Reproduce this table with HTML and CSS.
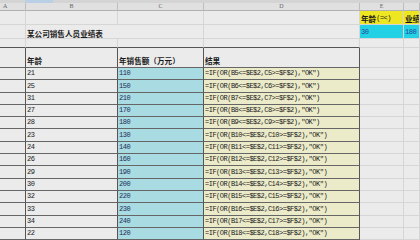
FILE: index.html
```html
<!DOCTYPE html>
<html>
<head>
<meta charset="utf-8">
<link rel="stylesheet" href="styles.css">
</head>
<body>
<div class="topbar"><span class="tb-a"></span><span class="tb-b"></span><span class="tb-c"></span></div>
<div class="sheet">
  <div class="ch ch-a">A</div><div class="ch">B</div><div class="ch">C</div><div class="ch">D</div><div class="ch">E</div><div class="ch"></div>

  <div class="c"></div><div class="c"></div><div class="c"></div><div class="c"></div><div class="c yel cjk">年龄<span class="m">(=&lt;)</span></div><div class="c yel cjk">业绩</div>

  <div class="c"></div><div class="c span2 cjk title">某公司销售人员业绩表</div><div class="c"></div><div class="c cyan m blue">30</div><div class="c cyan m blue">180</div>

  <div class="c tb"></div><div class="c tb"></div><div class="c tb"></div><div class="c tb"></div><div class="c"></div><div class="c"></div>

  <div class="c t"></div><div class="c t cjk hd">年龄</div><div class="c t cjk hd">年销售额（万元）</div><div class="c t cjk hd">结果</div><div class="c"></div><div class="c"></div>

  <div class="c t"></div><div class="c t m">21</div><div class="c t m tc">110</div><div class="c t m td">=IF(OR(B5&lt;=$E$2,C5&gt;=$F$2),"OK")</div><div class="c"></div><div class="c"></div>
  <div class="c t"></div><div class="c t m">25</div><div class="c t m tc">150</div><div class="c t m td">=IF(OR(B6&lt;=$E$2,C6&gt;=$F$2),"OK")</div><div class="c"></div><div class="c"></div>
  <div class="c t"></div><div class="c t m">31</div><div class="c t m tc">210</div><div class="c t m td">=IF(OR(B7&lt;=$E$2,C7&gt;=$F$2),"OK")</div><div class="c"></div><div class="c"></div>
  <div class="c t"></div><div class="c t m">27</div><div class="c t m tc">170</div><div class="c t m td">=IF(OR(B8&lt;=$E$2,C8&gt;=$F$2),"OK")</div><div class="c"></div><div class="c"></div>
  <div class="c t"></div><div class="c t m">28</div><div class="c t m tc">180</div><div class="c t m td">=IF(OR(B9&lt;=$E$2,C9&gt;=$F$2),"OK")</div><div class="c"></div><div class="c"></div>
  <div class="c t"></div><div class="c t m">23</div><div class="c t m tc">130</div><div class="c t m td">=IF(OR(B10&lt;=$E$2,C10&gt;=$F$2),"OK")</div><div class="c"></div><div class="c"></div>
  <div class="c t"></div><div class="c t m">24</div><div class="c t m tc">140</div><div class="c t m td">=IF(OR(B11&lt;=$E$2,C11&gt;=$F$2),"OK")</div><div class="c"></div><div class="c"></div>
  <div class="c t"></div><div class="c t m">26</div><div class="c t m tc">160</div><div class="c t m td">=IF(OR(B12&lt;=$E$2,C12&gt;=$F$2),"OK")</div><div class="c"></div><div class="c"></div>
  <div class="c t"></div><div class="c t m">29</div><div class="c t m tc">190</div><div class="c t m td">=IF(OR(B13&lt;=$E$2,C13&gt;=$F$2),"OK")</div><div class="c"></div><div class="c"></div>
  <div class="c t"></div><div class="c t m">30</div><div class="c t m tc">200</div><div class="c t m td">=IF(OR(B14&lt;=$E$2,C14&gt;=$F$2),"OK")</div><div class="c"></div><div class="c"></div>
  <div class="c t"></div><div class="c t m">32</div><div class="c t m tc">220</div><div class="c t m td">=IF(OR(B15&lt;=$E$2,C15&gt;=$F$2),"OK")</div><div class="c"></div><div class="c"></div>
  <div class="c t"></div><div class="c t m">33</div><div class="c t m tc">230</div><div class="c t m td">=IF(OR(B16&lt;=$E$2,C16&gt;=$F$2),"OK")</div><div class="c"></div><div class="c"></div>
  <div class="c t"></div><div class="c t m">34</div><div class="c t m tc">240</div><div class="c t m td">=IF(OR(B17&lt;=$E$2,C17&gt;=$F$2),"OK")</div><div class="c"></div><div class="c"></div>
  <div class="c t"></div><div class="c t m">22</div><div class="c t m tc">120</div><div class="c t m td">=IF(OR(B18&lt;=$E$2,C18&gt;=$F$2),"OK")</div><div class="c"></div><div class="c"></div>
</div>
</body>
</html>
```
FILE: styles.css
```css
html, body {
  margin: 0;
  padding: 0;
  width: 420px;
  height: 240px;
  overflow: hidden;
  background: #e9e9e9;
}
.topbar {
  display: flex;
  height: 3px;
  background: #d4d4d4;
}
.tb-a { width: 25px; }
.tb-b { width: 28px; background: #b9cfe6; }
.tb-c { flex: 1; }

.sheet {
  display: grid;
  grid-template-columns: 26px 92px 86px 156px 44px 16px;
  grid-template-rows: 8px 14px 14px 9px 20px repeat(14, 12.3px);
}
.ch {
  box-sizing: border-box;
  background: #e0e0e0;
  border-right: 1px solid #bdbdbd;
  border-bottom: 1px solid #b0b0b0;
  font-family: "Liberation Serif", serif;
  font-size: 6px;
  line-height: 7px;
  color: #666;
  text-align: center;
}
.ch-a { text-align: left; padding-left: 3px; }

.c {
  box-sizing: border-box;
  border-right: 1px solid #d6d6d6;
  border-bottom: 1px solid #d6d6d6;
  background: #ebebeb;
  display: flex;
  align-items: flex-end;
  padding: 0 0 1px 1px;
  white-space: nowrap;
  overflow: hidden;
  color: #1a1a1a;
  font-size: 8px;
  line-height: 9px;
}
.cjk {
  font-family: "Noto Sans CJK SC", "Liberation Serif", sans-serif;
  font-weight: 700;
  font-size: 7.6px;
}
.m {
  font-family: "Liberation Mono", monospace;
  font-size: 7px;
  letter-spacing: -0.5px;
  font-weight: 400;
}
.title { padding-bottom: 0; }
.span2 { grid-column: span 2; }
.yel { background: #efe622; }
.cyan { background: #22d1e4; }
.blue { color: #22479a; }
.tb { border-bottom-color: #555; }
.t {
  border-right-color: #555;
  border-bottom-color: #666;
}
.hd { padding-bottom: 2px; color: #1a1a1a; }
.tc { background: #a9dbe3; color: #1c2f55; }
.td { background: #ecebc9; color: #1a1a1a; }
```
